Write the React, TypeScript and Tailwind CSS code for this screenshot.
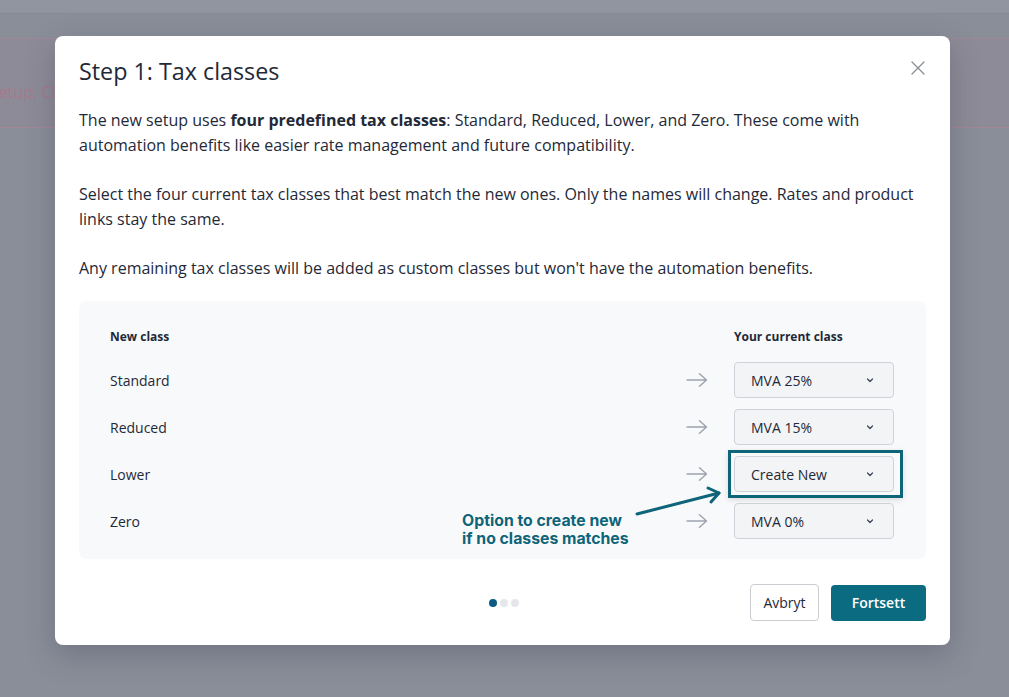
import React from 'react';

const rows = [
  { name: 'Standard', value: 'MVA 25%' },
  { name: 'Reduced', value: 'MVA 15%' },
  { name: 'Lower', value: 'Create New', highlight: true },
  { name: 'Zero', value: 'MVA 0%' },
];

const Chevron = () => (
  <svg width="10" height="10" viewBox="0 0 10 10" fill="none" stroke="#374151" strokeWidth="1.2" strokeLinecap="round" strokeLinejoin="round">
    <path d="M2.5 4 L5 6.5 L7.5 4" />
  </svg>
);

const RightArrow = () => (
  <svg width="22" height="14" viewBox="0 0 22 14" fill="none" stroke="#9ca3af" strokeWidth="1.4" strokeLinecap="round" strokeLinejoin="round">
    <path d="M1 7 H20.5 M13.5 0.8 L20.5 7 L13.5 13.2" />
  </svg>
);

const App = () => {
  return (
    <div className="relative w-[1009px] h-[697px] overflow-hidden bg-[#898e99] font-['Open_Sans',sans-serif]">
      {/* page behind the overlay */}
      <div className="h-[14px] bg-[#9095a0] border-b border-[#858a95]" />
      <div className="mt-[24px] h-[90px] bg-[#8e8b98] border-y border-[#a38797] flex items-center pt-[18px]">
        <span className="-ml-[9px] text-[16px] leading-[24px] text-[#a8788e]">setup. Click here to start the new setup.</span>
      </div>

      {/* modal */}
      <div className="absolute left-[55px] top-[36px] w-[895px] h-[609px] bg-white rounded-[8px] shadow-[0_10px_30px_rgba(40,45,60,0.25)] px-6 pt-[19px] flex flex-col">
        <div className="flex items-start justify-between">
          <h1 className="text-[23.3px] leading-[32px] text-[#1f2937]">Step 1: Tax classes</h1>
          <button className="mt-[6px] mr-[1px] text-[#8b8f96]">
            <svg width="14" height="14" viewBox="0 0 14 14" stroke="currentColor" strokeWidth="1.4" strokeLinecap="round">
              <path d="M1 1 L13 13 M13 1 L1 13" />
            </svg>
          </button>
        </div>

        <div className="mt-[21px] text-[16px] leading-[25px] text-[#1f2937] space-y-[24px]">
          <p>
            The new setup uses <b className="font-bold">four predefined tax classes</b>: Standard, Reduced, Lower, and Zero. These come with
            automation benefits like easier rate management and future compatibility.
          </p>
          <p>
            Select the four current tax classes that best match the new ones. Only the names will change. Rates and product
            links stay the same.
          </p>
          <p>Any remaining tax classes will be added as custom classes but won't have the automation benefits.</p>
        </div>

        <div className="relative mt-[20px] bg-[#f8f9fb] rounded-[8px] pl-[31px] pr-[32px] pt-[28px] pb-[20px]">
          <div className="flex justify-between text-[12px] leading-[16px] font-bold text-[#1f2937]">
            <span>New class</span>
            <span className="w-[160px]">Your current class</span>
          </div>
          <div className="mt-[17px] flex flex-col gap-[11px]">
            {rows.map((r) => (
              <div key={r.name} className="flex items-center h-[36px] text-[14px] text-[#1f2937]">
                <span className="flex-1">{r.name}</span>
                <span className="mr-[26px] flex items-center"><RightArrow /></span>
                <div className="relative">
                  <div className="w-[160px] h-[36px] border border-[#cfd3d9] rounded-[4px] bg-[#f3f4f6] flex items-center justify-between pl-[16px] pr-[18px]">
                    <span>{r.value}</span>
                    <Chevron />
                  </div>
                  {r.highlight && (
                    <div className="absolute -left-[6px] -top-[6px] -bottom-[6px] -right-[9px] border-[3px] border-[#0e6479] shadow-[0_2px_6px_rgba(0,0,0,0.12)]" />
                  )}
                </div>
              </div>
            ))}
          </div>

          {/* annotation */}
          <svg className="absolute left-[554px] top-[184px]" width="92" height="36" viewBox="0 0 92 36" fill="none" stroke="#0e6479" strokeWidth="3" strokeLinecap="round" strokeLinejoin="round">
            <path d="M4 29 L86 8" />
            <path d="M75 3 L86 8 L78 17" />
          </svg>
          <div className="absolute left-[383px] top-[211px] font-['Inter',sans-serif] font-bold text-[15.8px] leading-[18px] text-[#0e6479] [text-shadow:0_0_6px_rgba(255,255,255,0.9)]">
            Option to create new
            <br />
            if no classes matches
          </div>
        </div>

        <div className="relative mt-auto mb-[24px] flex items-center justify-end gap-3">
          <div className="absolute left-[410px] top-1/2 -translate-y-1/2 flex gap-[3px]">
            <span className="w-[8px] h-[8px] rounded-full bg-[#0b5b82]" />
            <span className="w-[8px] h-[8px] rounded-full bg-[#e5e7eb]" />
            <span className="w-[8px] h-[8px] rounded-full bg-[#e5e7eb]" />
          </div>
          <button className="h-[37px] w-[69px] border border-[#c9ccd1] rounded-[4px] text-[14px] text-[#1f2937] bg-white">Avbryt</button>
          <button className="h-[36px] w-[95px] rounded-[4px] text-[14px] font-semibold text-white bg-[#0b6b80]">Fortsett</button>
        </div>
      </div>
    </div>
  );
};

export default App;
